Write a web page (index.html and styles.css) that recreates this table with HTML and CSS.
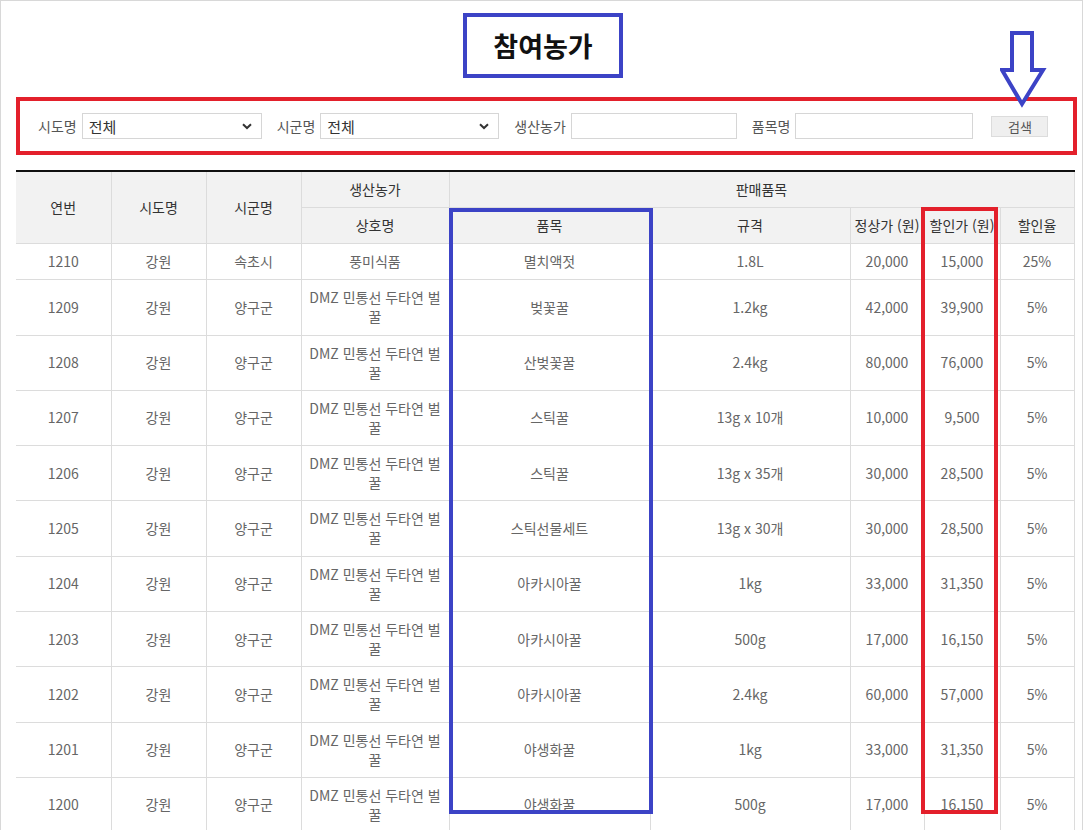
FILE: index.html
```html
<!DOCTYPE html>
<html lang="ko">
<head>
<meta charset="utf-8">
<title>참여농가</title>
<link rel="stylesheet" href="styles.css">
</head>
<body>
<div class="frame">
  <div class="title-row">
    <h1 class="title">참여농가</h1>
  </div>
  <svg class="arrow" width="50" height="80" viewBox="0 0 50 80" aria-hidden="true">
    <polygon points="12,2 32,2 32,39 43,39 22,73 2,39 12,39" fill="#fff" stroke="#3c43c6" stroke-width="4" stroke-linejoin="miter"/>
  </svg>
  <form class="filter">
    <label class="lbl">시도명</label>
    <select class="sel sel-sido"><option>전체</option></select>
    <label class="lbl gap">시군명</label>
    <select class="sel sel-sigun"><option>전체</option></select>
    <label class="lbl gap">생산농가</label>
    <input class="txt txt-farm" type="text">
    <label class="lbl gap">품목명</label>
    <input class="txt txt-item" type="text">
    <button class="btn" type="button">검색</button>
  </form>
  <div class="table-wrap">
    <table class="list">
      <colgroup>
        <col class="c1"><col class="c2"><col class="c3"><col class="c4"><col class="c5"><col class="c6"><col class="c7"><col class="c8"><col class="c9">
      </colgroup>
      <thead>
        <tr>
          <th rowspan="2">연번</th>
          <th rowspan="2">시도명</th>
          <th rowspan="2">시군명</th>
          <th>생산농가</th>
          <th colspan="5">판매품목</th>
        </tr>
        <tr>
          <th>상호명</th>
          <th>품목</th>
          <th>규격</th>
          <th class="tight">정상가 (원)</th>
          <th class="tight">할인가 (원)</th>
          <th>할인율</th>
        </tr>
      </thead>
      <tbody>
        <tr><td>1210</td><td>강원</td><td>속초시</td><td>풍미식품</td><td>멸치액젓</td><td>1.8L</td><td>20,000</td><td>15,000</td><td>25%</td></tr>
        <tr><td>1209</td><td>강원</td><td>양구군</td><td>DMZ 민통선 두타연 벌꿀</td><td>벚꽃꿀</td><td>1.2kg</td><td>42,000</td><td>39,900</td><td>5%</td></tr>
        <tr><td>1208</td><td>강원</td><td>양구군</td><td>DMZ 민통선 두타연 벌꿀</td><td>산벚꽃꿀</td><td>2.4kg</td><td>80,000</td><td>76,000</td><td>5%</td></tr>
        <tr><td>1207</td><td>강원</td><td>양구군</td><td>DMZ 민통선 두타연 벌꿀</td><td>스틱꿀</td><td>13g x 10개</td><td>10,000</td><td>9,500</td><td>5%</td></tr>
        <tr><td>1206</td><td>강원</td><td>양구군</td><td>DMZ 민통선 두타연 벌꿀</td><td>스틱꿀</td><td>13g x 35개</td><td>30,000</td><td>28,500</td><td>5%</td></tr>
        <tr><td>1205</td><td>강원</td><td>양구군</td><td>DMZ 민통선 두타연 벌꿀</td><td>스틱선물세트</td><td>13g x 30개</td><td>30,000</td><td>28,500</td><td>5%</td></tr>
        <tr><td>1204</td><td>강원</td><td>양구군</td><td>DMZ 민통선 두타연 벌꿀</td><td>아카시아꿀</td><td>1kg</td><td>33,000</td><td>31,350</td><td>5%</td></tr>
        <tr><td>1203</td><td>강원</td><td>양구군</td><td>DMZ 민통선 두타연 벌꿀</td><td>아카시아꿀</td><td>500g</td><td>17,000</td><td>16,150</td><td>5%</td></tr>
        <tr><td>1202</td><td>강원</td><td>양구군</td><td>DMZ 민통선 두타연 벌꿀</td><td>아카시아꿀</td><td>2.4kg</td><td>60,000</td><td>57,000</td><td>5%</td></tr>
        <tr><td>1201</td><td>강원</td><td>양구군</td><td>DMZ 민통선 두타연 벌꿀</td><td>야생화꿀</td><td>1kg</td><td>33,000</td><td>31,350</td><td>5%</td></tr>
        <tr><td>1200</td><td>강원</td><td>양구군</td><td>DMZ 민통선 두타연 벌꿀</td><td>야생화꿀</td><td>500g</td><td>17,000</td><td>16,150</td><td>5%</td></tr>
      </tbody>
    </table>
    <div class="mark mark-blue"></div>
    <div class="mark mark-red"></div>
  </div>
</div>
</body>
</html>
```

FILE: styles.css
```css
* { box-sizing: border-box; }
html, body { margin: 0; padding: 0; background: #fff; }
body {
  font-family: "Noto Sans CJK KR", "Noto Sans", sans-serif;
  color: #666;
  overflow: hidden;
}
.frame {
  position: relative;
  width: 1083px;
  min-height: 900px;
  border: 1px solid #d8d8d8;
  padding: 12px 0 0 15px;
}
.title-row {
  width: 1058px;
  display: flex;
  justify-content: center;
}
.title {
  margin: 0 0 0 -4px;
  width: 160px;
  height: 65px;
  border: 4px solid #3c43c6;
  font-size: 27px;
  font-weight: 700;
  color: #111;
  display: flex;
  align-items: center;
  justify-content: center;
  line-height: 1;
}
.arrow {
  position: absolute;
  left: 999px;
  top: 30px;
}
.filter {
  margin-top: 19px;
  width: 1061px;
  height: 58px;
  border: 4px solid #e3202b;
  display: flex;
  align-items: center;
  padding-left: 18px;
}
.lbl {
  font-size: 14px;
  color: #555;
  margin-right: 5px;
  white-space: nowrap;
}
.lbl.gap { margin-left: 15px; }
.sel {
  -webkit-appearance: none;
  appearance: none;
  height: 26px;
  border: 1px solid #d6d6d6;
  background: #fff url("data:image/svg+xml;utf8,<svg xmlns='http://www.w3.org/2000/svg' width='10' height='7' viewBox='0 0 10 7'><path d='M1 1.2 L5 5 L9 1.2' fill='none' stroke='%23333' stroke-width='2'/></svg>") no-repeat right 9px center;
  font-family: inherit;
  font-size: 15px;
  font-weight: 400;
  color: #333;
  padding: 0 0 0 6px;
  border-radius: 0;
  margin: 0;
}
.sel-sido { width: 180px; }
.sel-sigun { width: 179px; }
.txt {
  height: 26px;
  border: 1px solid #d6d6d6;
  margin: 0;
  padding: 0 4px;
  background: #fff;
}
.txt-farm { width: 166px; }
.txt-item { width: 178px; margin-right: 0; }
.btn {
  margin-left: 18px;
  width: 57px;
  height: 21px;
  border: 1px solid #dcdcdc;
  background: #efefef;
  font-family: inherit;
  font-size: 13px;
  color: #555;
  padding: 0;
  line-height: 19px;
}
.table-wrap {
  position: relative;
  margin-top: 15px;
  width: 1058px;
}
.list {
  width: 1058px;
  border-collapse: collapse;
  table-layout: fixed;
  border-top: 2px solid #111;
  font-size: 14px;
}
.c1, .c2, .c3 { width: 95px; }
.c4 { width: 148px; }
.c5 { width: 201px; }
.c6 { width: 200px; }
.c7 { width: 74px; }
.c8 { width: 76px; }
.c9 { width: 74px; }
.list th, .list td {
  border: 1px solid #dcdcdc;
  text-align: center;
  vertical-align: middle;
  line-height: 19px;
  padding: 8px 6px;
}
.list td { padding-bottom: 8.3px; }
.list tr:first-child th { border-top: 0; }
.list th:first-child, .list td:first-child { border-left: 0; }
.list th {
  background: #f2f2f2;
  color: #333;
  font-weight: 400;
}
.list th.tight { padding-left: 0; padding-right: 0; white-space: nowrap; }
.list td { color: #666; }
.mark {
  position: absolute;
  border: 4px solid;
  pointer-events: none;
}
.mark-blue {
  border-color: #3c43c6;
  left: 433px;
  top: 38px;
  width: 204px;
  height: 606px;
}
.mark-red {
  border-color: #e3202b;
  left: 905px;
  top: 37px;
  width: 77px;
  height: 607px;
}
```
